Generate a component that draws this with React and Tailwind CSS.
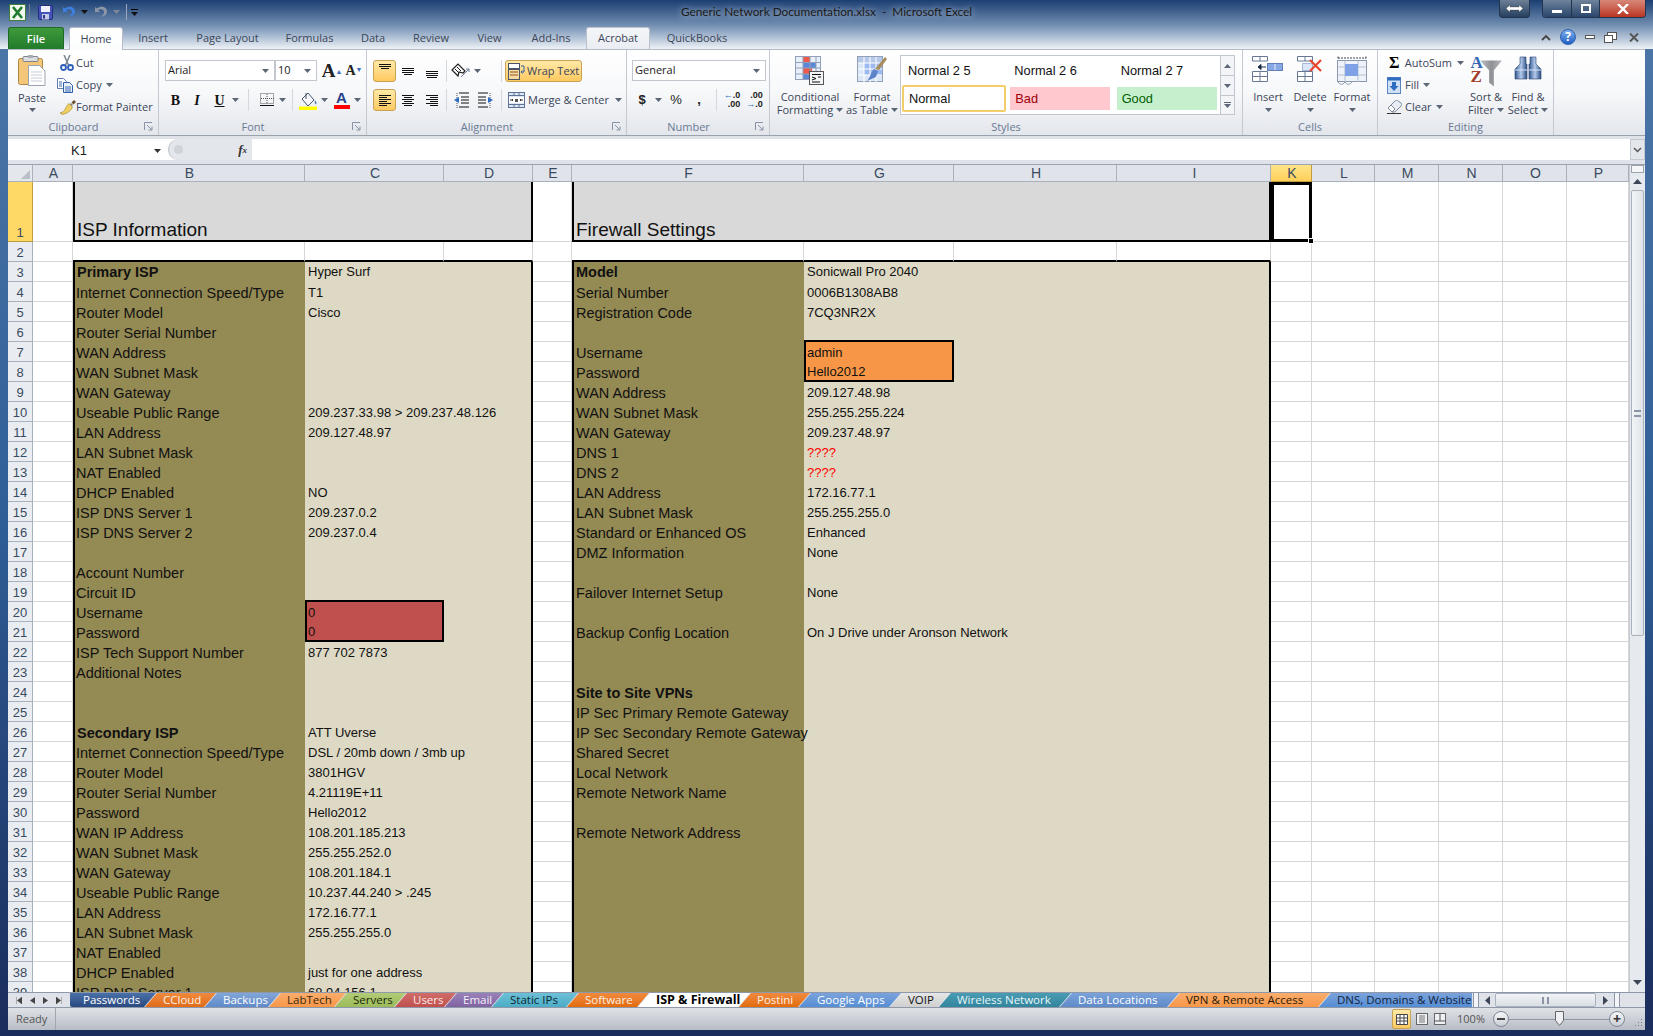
import React from 'react';

const Caret = ({ c = '#5c6675' }) => (
  <svg width="7" height="4" viewBox="0 0 7 4" className="shrink-0"><path d="M0 0h7L3.5 4z" fill={c} /></svg>
);

const Lines = ({ rows, w = 16, h = 16 }) => (
  <svg width={w} height={h} viewBox={`0 0 ${w} ${h}`}>
    {rows.map(([x1, x2, y], i) => (
      <path key={i} d={`M${x1} ${y + 0.5}H${x2}`} stroke="#111" strokeWidth="1" />
    ))}
  </svg>
);

const ExcelIcon = () => (
  <svg width="17" height="17" viewBox="0 0 17 17">
    <rect x="0.5" y="0.5" width="16" height="16" fill="#f2f7ee" stroke="#3d7f3a" />
    <path d="M4 3l9 11M13 3L4 14" stroke="#1e7b2c" strokeWidth="2.6" />
  </svg>
);
const SaveIcon = () => (
  <svg width="15" height="15" viewBox="0 0 15 15">
    <rect x="0.5" y="0.5" width="14" height="14" rx="1" fill="#4454b8" stroke="#232c78" />
    <rect x="3" y="1" width="9" height="6" fill="#eef1fb" />
    <rect x="4" y="9" width="7" height="5.5" fill="#c5cbe4" />
    <rect x="5" y="10" width="2" height="3.5" fill="#2d3587" />
  </svg>
);
const UndoIcon = ({ c }) => (
  <svg width="14" height="14" viewBox="0 0 14 14">
    <path d="M1 2v5h5L4 5c3-2 7 0 6 3-.4 1.5-2 3-3 4 3-.5 6-2.4 6-5.500C13 2 7 0 3 3.600z" fill={c} />
  </svg>
);
const PasteIcon = () => (
  <svg width="28" height="31" viewBox="0 0 28 31">
    <rect x="0.5" y="3.500" width="24" height="26" rx="2" fill="#f3c777" stroke="#b08442" />
    <rect x="5" y="1.500" width="15" height="5" rx="1" fill="#dcdde0" stroke="#7f8590" />
    <rect x="10" y="0" width="5" height="3" fill="#a7acb6" />
    <path d="M10.500 10.500h11l5.500 5.500v14.500h-16.500z" fill="#fff" stroke="#9aa3b0" />
    <path d="M13 17h11M13 20h11M13 23h11M13 26h11" stroke="#c5ccd6" />
  </svg>
);
const CutIcon = () => (
  <svg width="14" height="16" viewBox="0 0 14 16">
    <path d="M4 0l4.500 10M10 0L5.500 10" stroke="#7c8590" strokeWidth="1.500" />
    <circle cx="3.500" cy="12.500" r="2.500" fill="none" stroke="#2f5fb8" strokeWidth="1.800" />
    <circle cx="10.500" cy="12.500" r="2.500" fill="none" stroke="#2f5fb8" strokeWidth="1.800" />
  </svg>
);
const CopyIcon = () => (
  <svg width="16" height="15" viewBox="0 0 16 15">
    <path d="M.5.500h6l3 3v7h-9z" fill="#fff" stroke="#5f7fb0" />
    <path d="M6.500 4.500h6l3 3v7h-9z" fill="#e9f0fa" stroke="#2f5fa8" />
    <path d="M8 9h6M8 11h6M8 13h6M2 4h3M2 6h3M2 8h3" stroke="#3f6db5" />
  </svg>
);
const PainterIcon = () => (
  <svg width="16" height="15" viewBox="0 0 16 15">
    <path d="M9 5l2-2 2 2-2 2z" fill="#8b8f96" />
    <path d="M11.500 2.500L14 0l2 2-2.500 2.500z" fill="#6b4e2a" />
    <path d="M9 3.500l3.500 3.500c-1 3-5 6.500-10 7.500L0 13c3.500-1 4-2 5-3.500C5.500 8 7 5 9 3.500z" fill="#f0d060" stroke="#a58a30" strokeWidth="0.700" />
  </svg>
);
const BorderIcon = () => (
  <svg width="15" height="14" viewBox="0 0 15 14">
    <rect x="0.500" y="0.500" width="13" height="10" fill="none" stroke="#555" strokeDasharray="1 1" />
    <path d="M7 1v10M1 5.500h13" stroke="#555" strokeDasharray="1 1" />
    <path d="M0 12.500h14" stroke="#111" />
  </svg>
);
const FillIcon = () => (
  <svg width="19" height="19" viewBox="0 0 19 19">
    <path d="M3 8l6-6 6 7-6 6z" fill="#f6f8fc" stroke="#44526a" />
    <path d="M7 2v6" stroke="#44526a" />
    <path d="M16 9c1.500 2 2 3.500 1 4.200-1 .4-1.800-.6-1-4.200z" fill="#5a7fb8" />
    <rect x="0" y="15.500" width="18" height="3.500" fill="#ffff00" />
  </svg>
);
const AlignBtn = ({ active, rows, w = 'w-[24px]' }) => (
  <div className={`${w} h-[22px] flex items-center justify-center rounded-[3px] ${active ? 'bg-gradient-to-b from-[#ffe9a6] to-[#fdc95f] border border-[#c8a356]' : ''}`}>
    <Lines rows={rows} />
  </div>
);
const IndentIcon = ({ flip }) => (
  <svg width="17" height="17" viewBox="0 0 17 17" className={flip ? '-scale-x-100' : ''}>
    <path d="M5 1h10M7 5h8M7 8h8M7 11h8M5 15h10" stroke="#111" fill="none" />
    <path d="M3 1v15" stroke="#555" strokeDasharray="1 1" />
    <path d="M0 8l5-3v6z" fill="#2f6cc2" />
  </svg>
);
const OrientIcon = () => (
  <svg width="22" height="16" viewBox="0 0 22 16">
    <path d="M1 7l6-6 7 7-2 2-4-1-1 4z" fill="none" stroke="#222" strokeWidth="1.200" />
    <path d="M4 6l4 4M6 4l4 4" stroke="#222" />
    <path d="M10 14l8-8m-3 0h3v3" stroke="#6a7a96" fill="none" />
  </svg>
);
const WrapIcon = () => (
  <svg width="18" height="17" viewBox="0 0 18 17">
    <rect x="0.500" y="0.500" width="11" height="5" fill="#fff" stroke="#4a5568" />
    <rect x="0.500" y="6.500" width="11" height="10" fill="#f8d9a0" stroke="#4a5568" />
    <path d="M2 9h8M2 12h8" stroke="#8a5a20" />
    <path d="M13 3h3v6h-3m1.500-1.500L13 9l1.500 1.500" stroke="#2f5fa8" fill="none" />
  </svg>
);
const MergeIcon = () => (
  <svg width="17" height="16" viewBox="0 0 17 16">
    <rect x="0.500" y="0.500" width="16" height="15" fill="#dce6f4" stroke="#5f7397" />
    <path d="M1 3.500h15M1 12.500h15M6 1v2M11 1v2M6 13v2M11 13v2" stroke="#5f7397" />
    <rect x="1" y="5" width="15" height="6" fill="#fff" />
    <path d="M2 8h3l-1-1m1 1l-1 1M15 8h-3l1-1m-1 1l1 1" stroke="#333" fill="none" />
    <path d="M7 7h3v3H7z" fill="#555" />
  </svg>
);
const GridBase = ({ children }) => (
  <svg width="32" height="30" viewBox="0 0 32 30">{children}</svg>
);
const CondIcon = () => (
  <GridBase>
    <rect x="1.500" y="0.500" width="25" height="23" fill="#e9eff8" stroke="#8fa0b8" />
    <rect x="9" y="1" width="7" height="6" fill="#ef5a4c" />
    <rect x="9" y="7" width="13" height="5" fill="#5d88d8" />
    <rect x="9" y="12" width="9" height="6" fill="#ef5a4c" />
    <rect x="9" y="18" width="7" height="5" fill="#5d88d8" />
    <path d="M9 1v23M16 1v23M22 1v23M2 6.500h24M2 12h24M2 18h24" stroke="#8fa0b8" fill="none" />
    <rect x="15.500" y="15.500" width="14" height="13" fill="#f4f5f7" stroke="#555" />
    <path d="M18 18.500h9M18 21l4 1.500-4 1.500M27 21h-3M18 26h8" stroke="#111" fill="none" />
  </GridBase>
);
const TableIcon = () => (
  <GridBase>
    <rect x="1.500" y="0.500" width="25" height="25" fill="#dbe6f7" stroke="#8fa0b8" />
    <rect x="2" y="1" width="24" height="6" fill="#b7c9e8" />
    <rect x="8" y="7" width="18" height="12" fill="#9dbaf0" />
    <path d="M8 1v25M14 1v25M20 1v25M2 7h24M2 13h24M2 19h24" stroke="#fff" fill="none" />
    <path d="M29 1l2 2-8 11-4-1z" fill="#a88c5c" />
    <path d="M18 13l4 2-2 6-9 4c3-3 4-9 7-12z" fill="#5b83c8" />
  </GridBase>
);
const InsertIcon = () => (
  <svg width="32" height="26" viewBox="0 0 32 26">
    <path d="M.5.500h15v4.500H.5zM8 1v4M.5 15.500h15v10H.5zM8 16v9M1 20.500h14" fill="#fff" stroke="#667894" />
    <rect x="15.500" y="7.500" width="15" height="7" fill="#86a9e6" stroke="#5f7fb5" />
    <path d="M23 8v6" stroke="#e8eef9" />
    <path d="M6 11h8M6 11l3-2.500v5z" stroke="#1a2a44" fill="#1a2a44" />
  </svg>
);
const DeleteIcon = () => (
  <svg width="26" height="26" viewBox="0 0 26 26">
    <path d="M.5.500h15v4.500H.5zM8 1v4M.5 15.500h15v10H.5zM8 16v9M1 20.500h14" fill="#fff" stroke="#667894" />
    <rect x="5.500" y="7.500" width="10" height="7" fill="#dbe6f8" stroke="#5f7fb5" strokeDasharray="1 1" />
    <path d="M13 4l11 11M24 4L13 15" stroke="#e8452c" strokeWidth="2.200" />
  </svg>
);
const FormatIcon = () => (
  <svg width="30" height="29" viewBox="0 0 30 29">
    <path d="M1 .5v3M29 .5v3M1 2h28" stroke="#445" strokeDasharray="2 1" />
    <rect x="0.500" y="4.500" width="29" height="21" fill="#eef2f9" stroke="#8a99b0" />
    <path d="M8 5v21M21 5v21M1 11h28M1 19h28" stroke="#b4c0d2" />
    <rect x="8" y="8" width="13" height="12" fill="#7fa2e6" />
    <path d="M1 26c2 3 5 3 7 0M8 26c2 3 5 3 7 0" fill="none" stroke="#8a99b0" />
  </svg>
);
const FillDownIcon = () => (
  <svg width="14" height="17" viewBox="0 0 14 17">
    <rect x="0.500" y="0.500" width="13" height="16" fill="#cfe0f6" stroke="#5a82bd" />
    <rect x="0.500" y="0.500" width="13" height="3" fill="#2f6cc2" />
    <path d="M5 5h4v4h2.500L7 14 2.500 9H5z" fill="#2f6cc2" />
  </svg>
);
const EraserIcon = () => (
  <svg width="15" height="14" viewBox="0 0 15 14">
    <path d="M1 8l7-7c1-1 2-1 3 0l3 2c1 1 .8 2 0 3L8 12H5z" fill="#e9edf3" stroke="#7d8898" />
    <path d="M1 8l4 4 3-3-4-4z" fill="#fff" stroke="#7d8898" />
    <path d="M0 13.500h14" stroke="#333" />
  </svg>
);
const SortIcon = () => (
  <div className="flex items-start h-[30px] w-[31px]">
    <div className="flex flex-col w-[10px] font-['Liberation_Serif',serif] font-bold text-[17px] leading-[14px] z-10">
      <span className="text-[#3466b4]">A</span>
      <span className="text-[#a2402c]">Z</span>
    </div>
    <svg width="23" height="27" viewBox="0 0 23 27" className="mt-[4px] -ml-[1px]">
      <defs>
        <linearGradient id="fn" x1="0" x2="1" y1="0" y2="0">
          <stop offset="0" stopColor="#c2c4c8" /><stop offset="0.500" stopColor="#8e9095" /><stop offset="1" stopColor="#b6b8bc" />
        </linearGradient>
      </defs>
      <path d="M0 0h23l-8.500 10v17l-5-4V10z" fill="url(#fn)" />
    </svg>
  </div>
);
const BinocIcon = () => (
  <svg width="28" height="25" viewBox="0 0 28 25">
    <defs>
      <linearGradient id="bn" x1="0" x2="1" y1="0" y2="0">
        <stop offset="0" stopColor="#31568f" /><stop offset="0.500" stopColor="#b4cbec" /><stop offset="1" stopColor="#2a4c82" />
      </linearGradient>
    </defs>
    <path d="M6 1h6v7h1v15H1V13l5-5z" fill="url(#bn)" stroke="#2a4572" strokeWidth="0.600" />
    <path d="M16 1h6v7l5 5v10H15V8h1z" fill="url(#bn)" stroke="#2a4572" strokeWidth="0.600" />
    <path d="M1 14h12M15 14h12" stroke="#d8e4f6" />
  </svg>
);
const Launcher = () => (
  <div className="w-[19px] flex justify-center items-center">
    <svg width="9" height="9" viewBox="0 0 9 9"><path d="M.5 8V.5H8" fill="none" stroke="#8793a6" /><path d="M3 3l5 5M8 4.500V8H4.500" fill="none" stroke="#8793a6" /></svg>
  </div>
);

const Group = ({ w, label, launcher, children }) => (
  <div className={`${w} h-[85px] flex flex-col border-r border-[#c3c8d1] shrink-0`}>
    <div className="h-[69px] flex flex-col">{children}</div>
    <div className="h-[15px] flex items-center">
      <div className="flex-1 text-center text-[#6a7a94] text-[11px] leading-[15px]">{label}</div>
      {launcher && <Launcher />}
    </div>
  </div>
);
const Sep = ({ w }) => (
  <div className={`${w} h-[22px] flex justify-center`}><div className="w-px h-full bg-[#d3d7de]" /></div>
);
const Slot = ({ w, children }) => (
  <div className={`${w} h-[22px] flex items-center justify-center shrink-0`}>{children}</div>
);
const Big = ({ w, icon, l1, l2, caretLine }) => (
  <div className={`${w} flex flex-col items-center shrink-0 whitespace-nowrap`}>
    <div className="h-[36px] pt-[6px] flex items-start justify-center">{icon}</div>
    <div className="h-[13px] leading-[13px] mt-[4px] text-[#3b4658]">{l1}</div>
    <div className="h-[13px] leading-[13px] flex items-center gap-[3px] text-[#3b4658]">{l2}{caretLine && <Caret />}</div>
  </div>
);
const Combo = ({ w, text }) => (
  <div className={`${w} h-[21px] border border-[#c2c7cf] bg-white flex items-center justify-between pl-[2px] pr-[5px] shrink-0`}>
    <span className="text-[#222]">{text}</span><Caret />
  </div>
);

const TitleBar = () => (
  <div className="h-[27px] grid grid-cols-[1fr_auto_1fr] items-start">
    <div className="flex items-center h-[24px] pl-[9px] text-[#444]">
      <ExcelIcon />
      <div className="w-px h-[16px] bg-[#6b7d95] ml-[3px] mr-[8px]" />
      <SaveIcon />
      <div className="ml-[9px]"><UndoIcon c="#3d7ee0" /></div>
      <div className="ml-[5px]"><Caret c="#111" /></div>
      <div className="ml-[6px]"><UndoIcon c="#8c97a6" /></div>
      <div className="ml-[5px]"><Caret c="#7d8898" /></div>
      <div className="w-px h-[16px] bg-[#9aa6b5] ml-[6px] mr-[4px]" />
      <div className="flex flex-col gap-[2px]"><div className="w-[7px] h-px bg-black" /><Caret c="#111" /></div>
    </div>
    <div className="h-[24px] flex items-center font-['Lato',sans-serif] text-[11.8px] text-[#1a1a1a] whitespace-pre [text-shadow:0_0_7px_rgba(255,255,255,0.75)]">Generic Network Documentation.xlsx  -  Microsoft Excel</div>
    <div className="flex justify-end pr-[7px]">
      <div className="w-[31px] h-[18px] rounded-b-[4px] border border-t-0 border-[#23344f] bg-gradient-to-b from-[#6d7f96] to-[#26405f] flex items-center justify-center text-white text-[14px] leading-none">
        <svg width="17" height="9" viewBox="0 0 17 9"><path d="M0 4.500L4 1v2h9V1l4 3.500L13 8V6H4v2z" fill="#fff" stroke="#333" strokeWidth="0.300" /></svg>
      </div>
      <div className="ml-[12px] h-[18px] w-[104px] flex rounded-b-[4px] border border-t-0 border-[#23344f] overflow-hidden">
        <div className="w-[29px] bg-gradient-to-b from-[#6f839c] to-[#2a466a] flex items-center justify-center border-r border-[#23344f]"><div className="w-[10px] h-[3px] mt-[5px] bg-white" /></div>
        <div className="w-[28px] bg-gradient-to-b from-[#6f839c] to-[#2a466a] flex items-center justify-center border-r border-[#23344f]"><div className="w-[10px] h-[9px] border-2 border-white" /></div>
        <div className="flex-1 bg-gradient-to-b from-[#d8877a] to-[#b8331f] flex items-center justify-center">
          <svg width="12" height="10" viewBox="0 0 12 10"><path d="M1 0l10 10M11 0L1 10" stroke="#fff" strokeWidth="2.400" /></svg>
        </div>
      </div>
    </div>
  </div>
);

const tabs = [
  ['Insert', 'w-[60px]'], ['Page Layout', 'w-[89px]'], ['Formulas', 'w-[75px]'], ['Data', 'w-[52px]'],
  ['Review', 'w-[64px]'], ['View', 'w-[53px]'], ['Add-Ins', 'w-[70px]'],
];
const TabRow = () => (
  <div className="h-[22px] flex pl-[8px] pr-[14px] text-[11px]">
    <div className="w-[56px] h-[23px] rounded-t-[3px] border border-b-0 border-[#1c6a25] bg-gradient-to-b from-[#3f9a3c] to-[#1f7a2a] text-white font-semibold flex items-center justify-center">File</div>
    <div className="ml-[5px] w-[54px] h-[23px] rounded-t-[3px] border border-b-0 border-[#b5bcc8] bg-gradient-to-b from-white to-[#fbfcfd] text-[#3b4658] flex items-center justify-center z-10">Home</div>
    {tabs.map(([t, w]) => (
      <div key={t} className={`${w} flex items-center justify-center text-[#3b4658]`}>{t}</div>
    ))}
    <div className="w-[64px] rounded-t-[3px] border border-b-0 border-[#bcc3ce] bg-gradient-to-b from-[#f4f6f9] to-[#eaedf2] text-[#3b4658] flex items-center justify-center">Acrobat</div>
    <div className="w-[94px] flex items-center justify-center text-[#3b4658]">QuickBooks</div>
    <div className="ml-auto flex items-center gap-[9px] pb-[2px]">
      <svg width="10" height="7" viewBox="0 0 10 7"><path d="M1 6l4-4 4 4" fill="none" stroke="#444" strokeWidth="1.800" /></svg>
      <div className="w-[16px] h-[16px] rounded-full bg-gradient-to-b from-[#7fb1ee] to-[#1f5fc4] border border-[#2b60b0] text-white text-[12px] font-bold flex items-center justify-center">?</div>
      <div className="w-[10px] h-[4px] border border-[#555] bg-white" />
      <svg width="13" height="11" viewBox="0 0 13 11"><rect x="3.500" y=".5" width="9" height="7" fill="#fff" stroke="#555" /><rect x=".5" y="3.500" width="8" height="7" fill="#fff" stroke="#555" /></svg>
      <svg width="10" height="9" viewBox="0 0 10 9" className="ml-[3px]"><path d="M1 .5l8 8M9 .5l-8 8" stroke="#555" strokeWidth="2" /></svg>
    </div>
  </div>
);

const Ribbon = () => (
  <div className="h-[86px] flex border-t border-[#b5bcc8] bg-gradient-to-b from-white via-[#f7f8fa] to-[#e3e6eb] text-[11px] text-[#3b4658] whitespace-nowrap">
    <Group w="w-[151px]" label="Clipboard" launcher>
      <div className="flex h-full">
        <div className="w-[48px] flex flex-col items-center">
          <div className="mt-[5px]"><PasteIcon /></div>
          <div className="leading-[13px] mt-[5px]">Paste</div>
          <div className="mt-[4px]"><Caret /></div>
        </div>
        <div className="flex flex-col pt-[2px] pl-[4px]">
          <div className="h-[22px] flex items-center"><div className="w-[16px]"><CutIcon /></div>Cut</div>
          <div className="h-[22px] flex items-center"><div className="w-[16px] -ml-[3px] mr-[3px]"><CopyIcon /></div>Copy<span className="ml-[4px]"><Caret /></span></div>
          <div className="h-[22px] flex items-center"><div className="w-[16px]"><PainterIcon /></div>Format Painter</div>
        </div>
      </div>
    </Group>
    <Group w="w-[208px]" label="Font" launcher>
      <div className="flex pl-[6px] pt-[10px] items-center">
        <Combo w="w-[110px]" text="Arial" />
        <Combo w="w-[42px]" text="10" />
        <div className="ml-[3px] w-[24px] text-center font-['Liberation_Serif',serif] font-bold text-[19px] leading-[21px] text-[#222]">A<sup className="text-[7px] text-[#3a6bbd]">▲</sup></div>
        <div className="w-[20px] text-center font-['Liberation_Serif',serif] font-bold text-[14px] leading-[21px] text-[#222]">A<sup className="text-[7px] text-[#3a6bbd]">▼</sup></div>
      </div>
      <div className="flex pl-[6px] mt-[8px] text-[#111] font-['Liberation_Serif',serif] font-bold text-[14px]">
        <Slot w="w-[21px]">B</Slot>
        <Slot w="w-[22px]"><i>I</i></Slot>
        <Slot w="w-[23px]"><u>U</u></Slot>
        <Slot w="w-[9px]"><Caret /></Slot>
        <Sep w="w-[16px]" />
        <Slot w="w-[22px]"><BorderIcon /></Slot>
        <Slot w="w-[9px]"><Caret /></Slot>
        <Sep w="w-[10px]" />
        <Slot w="w-[23px]"><FillIcon /></Slot>
        <Slot w="w-[9px]"><Caret /></Slot>
        <Slot w="w-[25px]">
          <div className="flex flex-col items-center w-[16px] leading-[14px] font-['Liberation_Sans',sans-serif] text-[#27408b] text-[15px]">A<div className="w-[16px] h-[4px] bg-[#ff0000]" /></div>
        </Slot>
        <Slot w="w-[7px]"><Caret /></Slot>
      </div>
    </Group>
    <Group w="w-[260px]" label="Alignment" launcher>
      <div className="flex pl-[6px] pt-[10px]">
        <AlignBtn active w="w-[23px]" rows={[[2, 14, 1], [2, 14, 3], [4, 12, 5]]} />
        <AlignBtn rows={[[2, 14, 5], [2, 14, 7], [2, 14, 9], [4, 12, 11]]} />
        <AlignBtn rows={[[2, 14, 8], [2, 14, 10], [2, 14, 12], [3, 13, 14]]} />
        <Sep w="w-[4px]" />
        <Slot w="w-[50px]"><div className="flex items-center gap-[1px] pr-[14px]"><OrientIcon /><Caret /></div></Slot>
        <Sep w="w-[7px]" />
        <div className="w-[77px] h-[22px] rounded-[3px] border border-[#c8a356] bg-gradient-to-b from-[#ffe9a6] to-[#fdc95f] flex items-center pl-[2px] gap-[1px] text-[#3b4658]"><WrapIcon />Wrap Text</div>
      </div>
      <div className="flex pl-[6px] mt-[7px]">
        <AlignBtn active w="w-[23px]" rows={[[2, 14, 3], [2, 10, 5], [2, 14, 7], [2, 10, 9], [2, 14, 11], [2, 10, 13]]} />
        <AlignBtn rows={[[2, 14, 3], [4, 12, 5], [2, 14, 7], [4, 12, 9], [2, 14, 11], [4, 12, 13]]} />
        <AlignBtn rows={[[2, 14, 3], [6, 14, 5], [2, 14, 7], [6, 14, 9], [2, 14, 11], [6, 14, 13]]} />
        <Sep w="w-[4px]" />
        <div className="w-[50px] h-[22px] flex items-center pl-[6px] gap-[5px]"><IndentIcon /><IndentIcon flip /></div>
        <Sep w="w-[7px]" />
        <div className="flex items-center h-[22px] pl-[3px] gap-[3px]"><MergeIcon />Merge &amp; Center<span className="ml-[3px]"><Caret /></span></div>
      </div>
    </Group>
    <Group w="w-[143px]" label="Number" launcher>
      <div className="pl-[5px] pt-[10px]"><Combo w="w-[134px]" text="General" /></div>
      <div className="flex pl-[5px] mt-[8px] text-[#222] font-bold text-[13px] font-['Liberation_Sans',sans-serif]">
        <Slot w="w-[20px]">$</Slot>
        <Slot w="w-[13px]"><Caret /></Slot>
        <Slot w="w-[22px]"><span className="font-normal">%</span></Slot>
        <Slot w="w-[24px]">,</Slot>
        <Sep w="w-[10px]" />
        <Slot w="w-[22px]"><div className="text-[9px] leading-[9px] text-right"><span className="text-[#2f6cc2]">←</span>.0<br />.00</div></Slot>
        <Slot w="w-[23px]"><div className="text-[9px] leading-[9px] text-right">.00<br /><span className="text-[#2f6cc2]">→</span>.0</div></Slot>
      </div>
    </Group>
    <Group w="w-[473px]" label="Styles">
      <div className="flex h-full">
        <Big w="w-[80px]" icon={<CondIcon />} l1="Conditional" l2="Formatting" caretLine />
        <Big w="w-[44px]" icon={<TableIcon />} l1="Format" l2="as Table" caretLine />
        <div className="ml-[6px] mt-[5px] w-[335px] h-[60px] border border-[#c2c7cf] bg-white flex text-[12.8px] text-[#111] font-['Liberation_Sans',sans-serif]">
          <div className="w-[319px] grid grid-cols-3 grid-rows-2">
            <div className="pl-[7px] flex items-center">Normal 2 5</div>
            <div className="pl-[7px] flex items-center">Normal 2 6</div>
            <div className="pl-[7px] flex items-center">Normal 2 7</div>
            <div className="pl-[1px] pb-[2px]"><div className="h-[27px] w-[104px] border-2 border-[#f2cd6a] rounded-[2px] pl-[5px] flex items-center">Normal</div></div>
            <div className="pl-[3px] pb-[5px] pt-[2px]"><div className="h-[23px] w-[100px] bg-[#ffc7ce] text-[#9c0006] pl-[5px] flex items-center">Bad</div></div>
            <div className="pl-[3px] pb-[5px] pt-[2px]"><div className="h-[23px] w-[100px] bg-[#c6efce] text-[#006100] pl-[5px] flex items-center">Good</div></div>
          </div>
          <div className="flex-1 flex flex-col border-l border-[#c2c7cf] bg-[#f2f4f7]">
            <div className="h-[20px] flex items-center justify-center border-b border-[#c2c7cf]"><div className="rotate-180"><Caret /></div></div>
            <div className="h-[20px] flex items-center justify-center border-b border-[#c2c7cf]"><Caret /></div>
            <div className="flex-1 flex flex-col items-center justify-center gap-[1px]"><div className="w-[7px] h-px bg-[#5c6675]" /><Caret /></div>
          </div>
        </div>
      </div>
    </Group>
    <Group w="w-[135px]" label="Cells">
      <div className="flex pl-[4px] h-full">
        <Big w="w-[42px]" icon={<InsertIcon />} l1="Insert" l2="" caretLine />
        <Big w="w-[42px]" icon={<DeleteIcon />} l1="Delete" l2="" caretLine />
        <Big w="w-[42px]" icon={<FormatIcon />} l1="Format" l2="" caretLine />
      </div>
    </Group>
    <Group w="w-[176px]" label="Editing">
      <div className="flex h-full">
        <div className="w-[86px] flex flex-col pt-[2px] pl-[9px]">
          <div className="h-[22px] flex items-center"><div className="w-[18px] font-['Liberation_Serif',serif] font-bold text-[16px] text-black pl-[2px]">Σ</div>AutoSum<span className="ml-[5px]"><Caret /></span></div>
          <div className="h-[22px] flex items-center"><div className="w-[18px]"><FillDownIcon /></div>Fill<span className="ml-[4px]"><Caret /></span></div>
          <div className="h-[22px] flex items-center"><div className="w-[18px]"><EraserIcon /></div>Clear<span className="ml-[4px]"><Caret /></span></div>
        </div>
        <Big w="w-[44px]" icon={<SortIcon />} l1="Sort &" l2="Filter" caretLine />
        <Big w="w-[40px]" icon={<BinocIcon />} l1="Find &" l2="Select" caretLine />
      </div>
    </Group>
    <div className="flex-1" />
  </div>
);

const FormulaBar = () => (
  <div className="h-[30px] bg-[#dfe3e9] border-t border-[#9aa2ae] flex flex-col">
    <div className="h-[3px]" />
    <div className="h-[21px] flex bg-white text-[13px] text-[#222] font-['Liberation_Sans',sans-serif]">
      <div className="w-[154px] pl-[63px] pt-[3px] flex items-center justify-between pr-[1px]">K1<Caret c="#333" /></div>
      <div className="ml-[6px] w-[84px] rounded-l-full bg-[#e3e6eb] border-l border-[#b8bdc6] flex items-center justify-end pr-[5px] font-['Liberation_Serif',serif] italic font-bold text-[#333]">
        <span className="mr-auto ml-[5px] w-[9px] h-[9px] rounded-full bg-[#cfd3da]" />f<span className="text-[9px] pt-[3px]">x</span>
      </div>
      <div className="flex-1" />
      <div className="w-[15px] bg-[#e3e6eb] border border-[#c5cad2] flex items-center justify-center">
        <svg width="9" height="6" viewBox="0 0 9 6"><path d="M1 1l3.500 3.500L8 1" fill="none" stroke="#555" strokeWidth="1.500" /></svg>
      </div>
    </div>
    <div className="flex-1 border-b border-[#9aa2ae]" />
  </div>
);

const COLS = 'grid grid-cols-[25px_40px_232px_139px_89px_39px_232px_150px_163px_154px_41px_63px_64px_64px_64px_62px]';
const LETTERS = ['A', 'B', 'C', 'D', 'E', 'F', 'G', 'H', 'I', 'K', 'L', 'M', 'N', 'O', 'P'];

const left = {
  3: ['Primary ISP', 'Hyper Surf'], 4: ['Internet Connection Speed/Type', 'T1'], 5: ['Router Model', 'Cisco'],
  6: ['Router Serial Number'], 7: ['WAN Address'], 8: ['WAN Subnet Mask'], 9: ['WAN Gateway'],
  10: ['Useable Public Range', '209.237.33.98 > 209.237.48.126'], 11: ['LAN Address', '209.127.48.97'],
  12: ['LAN Subnet Mask'], 13: ['NAT Enabled'], 14: ['DHCP Enabled', 'NO'], 15: ['ISP DNS Server 1', '209.237.0.2'],
  16: ['ISP DNS Server 2', '209.237.0.4'], 18: ['Account Number'], 19: ['Circuit ID'], 20: ['Username', '0'],
  21: ['Password', '0'], 22: ['ISP Tech Support Number', '877 702 7873'], 23: ['Additional Notes'],
  26: ['Secondary ISP', 'ATT Uverse'], 27: ['Internet Connection Speed/Type', 'DSL / 20mb down / 3mb up'],
  28: ['Router Model', '3801HGV'], 29: ['Router Serial Number', '4.21119E+11'], 30: ['Password', 'Hello2012'],
  31: ['WAN IP Address', '108.201.185.213'], 32: ['WAN Subnet Mask', '255.255.252.0'], 33: ['WAN Gateway', '108.201.184.1'],
  34: ['Useable Public Range', '10.237.44.240 > .245'], 35: ['LAN Address', '172.16.77.1'], 36: ['LAN Subnet Mask', '255.255.255.0'],
  37: ['NAT Enabled'], 38: ['DHCP Enabled', 'just for one address'], 39: ['ISP DNS Server 1', '68.94.156.1'],
};
const right = {
  3: ['Model', 'Sonicwall Pro 2040'], 4: ['Serial Number', '0006B1308AB8'], 5: ['Registration Code', '7CQ3NR2X'],
  7: ['Username', 'admin'], 8: ['Password', 'Hello2012'], 9: ['WAN Address', '209.127.48.98'], 10: ['WAN Subnet Mask', '255.255.255.224'],
  11: ['WAN Gateway', '209.237.48.97'], 12: ['DNS 1', '????'], 13: ['DNS 2', '????'], 14: ['LAN Address', '172.16.77.1'],
  15: ['LAN Subnet Mask', '255.255.255.0'], 16: ['Standard or Enhanced OS', 'Enhanced'], 17: ['DMZ Information', 'None'],
  19: ['Failover Internet Setup', 'None'], 21: ['Backup Config Location', 'On J Drive under Aronson Network'],
  24: ['Site to Site VPNs'], 25: ['IP Sec Primary Remote Gateway'], 26: ['IP Sec Secondary Remote Gateway'], 27: ['Shared Secret'],
  28: ['Local Network'], 29: ['Remote Network Name'], 31: ['Remote Network Address'],
};
const boldRows = { L3: 1, L26: 1, R3: 1, R24: 1 };

const GRID = 'border-r border-b border-[#d6d6d6] bg-white';
const LBL = 'z-20 flex items-center whitespace-nowrap text-[14.5px] leading-[16px] text-[#111]';
const VAL = 'z-10 flex items-center whitespace-nowrap text-[13px] leading-[16px]';

const cellFor = (r, c) => {
  if (r === 1) {
    if (c === 'B' || c === 'F') return { cls: `bg-[#d9d9d9] border-l-2 border-b-2 border-black flex items-end text-[19px] leading-[20px] text-[#111] whitespace-nowrap pl-[2px]`, text: c === 'B' ? 'ISP Information' : 'Firewall Settings' };
    if (c === 'C' || c === 'G' || c === 'H') return { cls: 'bg-[#d9d9d9] border-b-2 border-black' };
    if (c === 'D' || c === 'I') return { cls: 'bg-[#d9d9d9] border-b-2 border-r-2 border-black' };
  }
  if (r === 2 && 'BCDFGHI'.includes(c)) {
    return { cls: 'bg-white border-r border-r-[#d6d6d6] border-b-2 border-b-black' };
  }
  if (r >= 3) {
    const t = r === 3 ? '' : 'pt-[2px]';
    if (c === 'B' || c === 'F') {
      const d = c === 'B' ? left[r] : right[r];
      const bold = boldRows[(c === 'B' ? 'L' : 'R') + r];
      const pad = c === 'F' || bold ? 'pl-[2px]' : 'pl-[1px]';
      return { cls: `bg-[#948a54] border-l-2 border-black ${t} ${pad} ${LBL} ${bold ? 'font-bold' : ''}`, text: d && d[0] };
    }
    if (c === 'C') {
      const d = left[r];
      if (r === 20 || r === 21) return { cls: `bg-[#c0504d] border-l-2 border-r-2 border-black text-[#111] pt-[2px] ${r === 21 ? 'border-b-2' : ''} pl-[1px] ${VAL}`, text: d[1] };
      return { cls: `bg-[#ddd9c4] border-black text-[#111] pl-[3px] ${t} ${r === 19 ? 'border-b-2' : ''} ${VAL}`, text: d && d[1] };
    }
    if (c === 'D') return { cls: 'bg-[#ddd9c4] border-r-2 border-black' };
    if (c === 'G') {
      const d = right[r];
      if (r === 7 || r === 8) return { cls: `bg-[#f79646] border-l-2 border-r-2 border-black text-[#111] pt-[2px] ${r === 8 ? 'border-b-2' : ''} pl-[1px] ${VAL}`, text: d[1] };
      const redText = r === 12 || r === 13;
      return { cls: `bg-[#ddd9c4] border-black pl-[3px] ${t} ${r === 6 ? 'border-b-2' : ''} ${VAL} ${redText ? 'text-[#ff0000]' : 'text-[#111]'}`, text: d && d[1] };
    }
    if (c === 'H') return { cls: 'bg-[#ddd9c4]' };
    if (c === 'I') return { cls: 'bg-[#ddd9c4] border-r-2 border-black' };
  }
  if (r === 1 && c === 'K') return { cls: 'bg-white', sel: true };
  return { cls: GRID };
};

const Sheet = () => {
  const rows = [];
  for (let r = 1; r <= 39; r++) rows.push(r);
  return (
    <div className="flex h-[827px] bg-white">
      <div className="w-[1621px] font-['Liberation_Sans',sans-serif] overflow-hidden">
        <div className={`${COLS} h-[17px] text-[14px] leading-[14px] text-[#3a4a60]`}>
          <div className="bg-[#e4e8ed] border-r border-b border-[#a9b1bd] flex items-end justify-end pr-[2px] pb-[2px]">
            <svg width="9" height="9" viewBox="0 0 9 9"><path d="M9 0v9H0z" fill="#b8bfc9" /></svg>
          </div>
          {LETTERS.map((l) => (
            <div key={l} className={`flex items-center justify-center pl-[2px] pb-[1px] border-b border-r ${l === 'K' ? 'bg-gradient-to-b from-[#ffe48a] to-[#fdcf56] border-[#c29a3f]' : 'bg-[#e0e4ea] border-[#a9b1bd]'}`}>{l}</div>
          ))}
        </div>
        {rows.map((r) => (
          <div key={r} className={`${COLS} ${r === 1 ? 'h-[60px]' : 'h-[20px]'}`}>
            <div className={`border-r border-b text-[13px] leading-[16px] flex justify-center ${r === 1 ? 'items-end bg-[#ffd966] border-[#c29a3f] text-[#3a4a60]' : 'items-center pt-[2px] bg-[#e9edf2] border-[#a9b1bd] text-[#3a4a60]'}`}>{r}</div>
            {LETTERS.map((c) => {
              const { cls, text, sel } = cellFor(r, c);
              if (sel) {
                return (
                  <div key={c} className="relative z-20 border-[3px] border-black bg-white">
                    <div className="absolute -right-[5px] -bottom-[5px] w-[6px] h-[6px] bg-black border border-white" />
                  </div>
                );
              }
              return <div key={c} className={cls}>{text}</div>;
            })}
          </div>
        ))}
      </div>
      <div className="w-[16px] flex flex-col bg-[#e6eaef] border-l border-[#c5cad2]">
        <div className="h-[8px] border border-[#9aa2ae] bg-[#f4f5f7] mx-[1px]" />
        <div className="h-[17px] flex items-center justify-center"><svg width="9" height="5" viewBox="0 0 9 5"><path d="M0 5h9L4.500 0z" fill="#3c4656" /></svg></div>
        <div className="h-[446px] mx-[1px] rounded-[2px] border border-[#a9b1bd] bg-gradient-to-r from-[#f2f4f7] to-[#dfe3e9] flex items-center justify-center">
          <div className="w-[7px] h-[7px] border-y-2 border-[#8b94a3]" />
        </div>
        <div className="flex-1" />
        <div className="h-[20px] flex items-center justify-center"><svg width="9" height="5" viewBox="0 0 9 5"><path d="M0 0h9L4.500 5z" fill="#3c4656" /></svg></div>
      </div>
    </div>
  );
};

const sheetTabs = [
  ['Passwords', 'w-[86px]', 'bg-gradient-to-b from-[#4a70a8] to-[#2a4a80]', 'text-white', 'pl-[13px]'],
  ['CCloud', 'w-[71px]', 'bg-gradient-to-b from-[#f08a3c] to-[#e06c1a]', 'text-[#fdf0e4]', 'pl-[18px]'],
  ['Backups', 'w-[75px]', 'bg-gradient-to-b from-[#82a6d8] to-[#5f8ac8]', 'text-white', 'pl-[18px]'],
  ['LabTech', 'w-[77px]', 'bg-gradient-to-b from-[#fbad6c] to-[#f79646]', 'text-[#3a2a10]', 'pl-[18px]'],
  ['Servers', 'w-[71px]', 'bg-gradient-to-b from-[#b2cc76] to-[#9bbb59]', 'text-[#20280c]', 'pl-[18px]'],
  ['Users', 'w-[61px]', 'bg-gradient-to-b from-[#d06c69] to-[#c0504d]', 'text-[#fbe9e8]', 'pl-[18px]'],
  ['Email', 'w-[58px]', 'bg-gradient-to-b from-[#9a82b8] to-[#8064a2]', 'text-[#f3eef8]', 'pl-[18px]'],
  ['Static IPs', 'w-[86px]', 'bg-gradient-to-b from-[#6cc0d6] to-[#4bacc6]', 'text-[#0c2a32]', 'pl-[18px]'],
  ['Software', 'w-[82px]', 'bg-gradient-to-b from-[#f08a3c] to-[#e36c0a]', 'text-[#fdf0e4]', 'pl-[18px]'],
  ['ISP & Firewall', 'w-[112px]', 'bg-white', 'text-black font-bold text-[12.5px]', 'pl-[18px]'],
  ['Postini', 'w-[71px]', 'bg-gradient-to-b from-[#f08a3c] to-[#e36c0a]', 'text-[#fdf0e4]', 'pl-[18px]'],
  ['Google Apps', 'w-[102px]', 'bg-gradient-to-b from-[#7ba2da] to-[#558ed5]', 'text-white', 'pl-[18px]'],
  ['VOIP', 'w-[60px]', 'bg-gradient-to-b from-[#e6e6e6] to-[#cfcfcf]', 'text-[#111]', 'pl-[18px]'],
  ['Wireless Network', 'w-[132px]', 'bg-gradient-to-b from-[#4a9cb3] to-[#31859c]', 'text-[#e8f6fa]', 'pl-[18px]'],
  ['Data Locations', 'w-[119px]', 'bg-gradient-to-b from-[#7ba2da] to-[#5f8ac8]', 'text-white', 'pl-[18px]'],
  ['VPN & Remote Access', 'w-[162px]', 'bg-gradient-to-b from-[#fbad6c] to-[#f79646]', 'text-[#2a1a08]', 'pl-[18px]'],
  ['DNS, Domains & Websites', 'w-[190px]', 'bg-gradient-to-b from-[#7ba2da] to-[#558ed5]', 'text-[#10243f]', 'pl-[18px]'],
];

const SheetTabs = () => (
  <div className="h-[15px] flex bg-[#dfe3e9] border-t border-[#8e98a8] text-[11.5px] leading-[14px] font-['Open_Sans',sans-serif]">
    <div className="w-[62px] flex items-center justify-around px-[4px] shrink-0">
      <svg width="6" height="7" viewBox="0 0 6 7"><path d="M0 0v7M6 0v7L1.500 3.500z" stroke="#444" fill="#444" strokeWidth=".7" /></svg>
      <svg width="5" height="7" viewBox="0 0 5 7"><path d="M5 0v7L0 3.500z" fill="#444" /></svg>
      <svg width="5" height="7" viewBox="0 0 5 7"><path d="M0 0v7l5-3.500z" fill="#444" /></svg>
      <svg width="6" height="7" viewBox="0 0 6 7"><path d="M6 0v7M0 0v7l4.500-3.500z" stroke="#444" fill="#444" strokeWidth=".7" /></svg>
    </div>
    <div className="w-[1402px] flex overflow-hidden shrink-0">
      {sheetTabs.map(([t, w, bg, fg, pl], i) => (
        <div key={t} className={`${w} ${bg} ${fg} ${pl} ${i === 0 ? 'rounded-bl-[2px] [clip-path:polygon(0_0,100%_0,calc(100%-12px)_100%,0_100%)]' : '-ml-[11px] [clip-path:polygon(12px_0,100%_0,calc(100%-12px)_100%,0_100%)]'} shrink-0 whitespace-nowrap`}>{t}</div>
      ))}
    </div>
    <div className="w-[6px] border-x border-[#8e98a8] bg-[#f2f4f7] ml-[1px]" />
    <div className="w-[16px] flex items-center justify-center"><svg width="5" height="9" viewBox="0 0 5 9"><path d="M5 0v9L0 4.500z" fill="#3c4656" /></svg></div>
    <div className="w-[101px] rounded-[2px] border border-[#a9b1bd] bg-gradient-to-b from-[#f2f4f7] to-[#d9dde4] flex items-center justify-center">
      <div className="w-[7px] h-[7px] border-x-2 border-[#8b94a3]" />
    </div>
    <div className="w-[18px] flex items-center justify-center"><svg width="5" height="9" viewBox="0 0 5 9"><path d="M0 0v9l5-4.500z" fill="#3c4656" /></svg></div>
    <div className="w-[6px] border-x border-[#8e98a8] bg-[#f2f4f7]" />
  </div>
);

const StatusBar = () => (
  <div className="h-[23px] flex items-center bg-gradient-to-b from-[#dfe2e6] to-[#b8bcc5] border-t border-[#8e98a8] text-[11px] text-[#555]">
    <div className="w-[48px] h-full pl-[8px] flex items-center border-r border-[#a0a6b0]">Ready</div>
    <div className="flex-1" />
    <div className="w-[19px] h-[20px] rounded-[2px] border border-[#c8a356] bg-gradient-to-b from-[#ffe9a6] to-[#fdc95f] flex items-center justify-center">
      <svg width="12" height="11" viewBox="0 0 12 11"><path d="M.5.500h11v10H.5zM4 1v9M8 1v9M1 4h10M1 7h10" fill="#fff" stroke="#444" /></svg>
    </div>
    <div className="w-[18px] flex justify-center ml-[2px]"><svg width="12" height="12" viewBox="0 0 12 12"><rect x=".5" y=".5" width="11" height="11" fill="#eef0f3" stroke="#666" /><path d="M3 3h6M3 5h6M3 7h6M3 9h6" stroke="#777" /></svg></div>
    <div className="w-[18px] flex justify-center"><svg width="12" height="12" viewBox="0 0 12 12"><rect x=".5" y=".5" width="11" height="11" fill="#eef0f3" stroke="#666" /><path d="M6 1v7M1 8h10" stroke="#555" /></svg></div>
    <div className="w-[44px] text-center">100%</div>
    <div className="w-[16px] h-[16px] rounded-full border border-[#7d8694] bg-gradient-to-b from-[#f6f7f9] to-[#c9ced6] flex items-center justify-center"><div className="w-[8px] h-[2px] bg-[#444]" /></div>
    <div className="w-[100px] h-[16px] flex items-center relative">
      <div className="w-full h-px bg-[#8f96a3]" />
      <svg width="9" height="15" viewBox="0 0 9 15" className="absolute left-[46px] top-0"><path d="M.5.500h8v9l-4 5-4-5z" fill="#eef0f3" stroke="#666" /></svg>
    </div>
    <div className="w-[16px] h-[16px] rounded-full border border-[#7d8694] bg-gradient-to-b from-[#f6f7f9] to-[#c9ced6] flex items-center justify-center text-[14px] leading-none font-bold text-[#333]">+</div>
    <div className="w-[20px] h-full flex items-end justify-end pr-[2px] pb-[2px]">
      <svg width="10" height="10" viewBox="0 0 10 10"><path d="M8 1h1v1H8zM5 4h1v1H5zM8 4h1v1H8zM2 7h1v1H2zM5 7h1v1H5zM8 7h1v1H8z" fill="#7a818d" /></svg>
    </div>
  </div>
);

export default function App() {
  return (
    <div className="w-[1653px] h-[1036px] overflow-hidden flex flex-col font-['Open_Sans',sans-serif] bg-gradient-to-b from-[#4e78a8] via-[#2f5e97] to-[#1a2c5c]">
      <div className="h-[49px] bg-gradient-to-b from-[#1c3f72] via-[#6f8cb0] to-[#eef2f6]">
        <TitleBar />
        <TabRow />
      </div>
      <div className="px-[8px] flex flex-col">
        <Ribbon />
        <FormulaBar />
        <Sheet />
        <SheetTabs />
        <StatusBar />
      </div>
    </div>
  );
}
